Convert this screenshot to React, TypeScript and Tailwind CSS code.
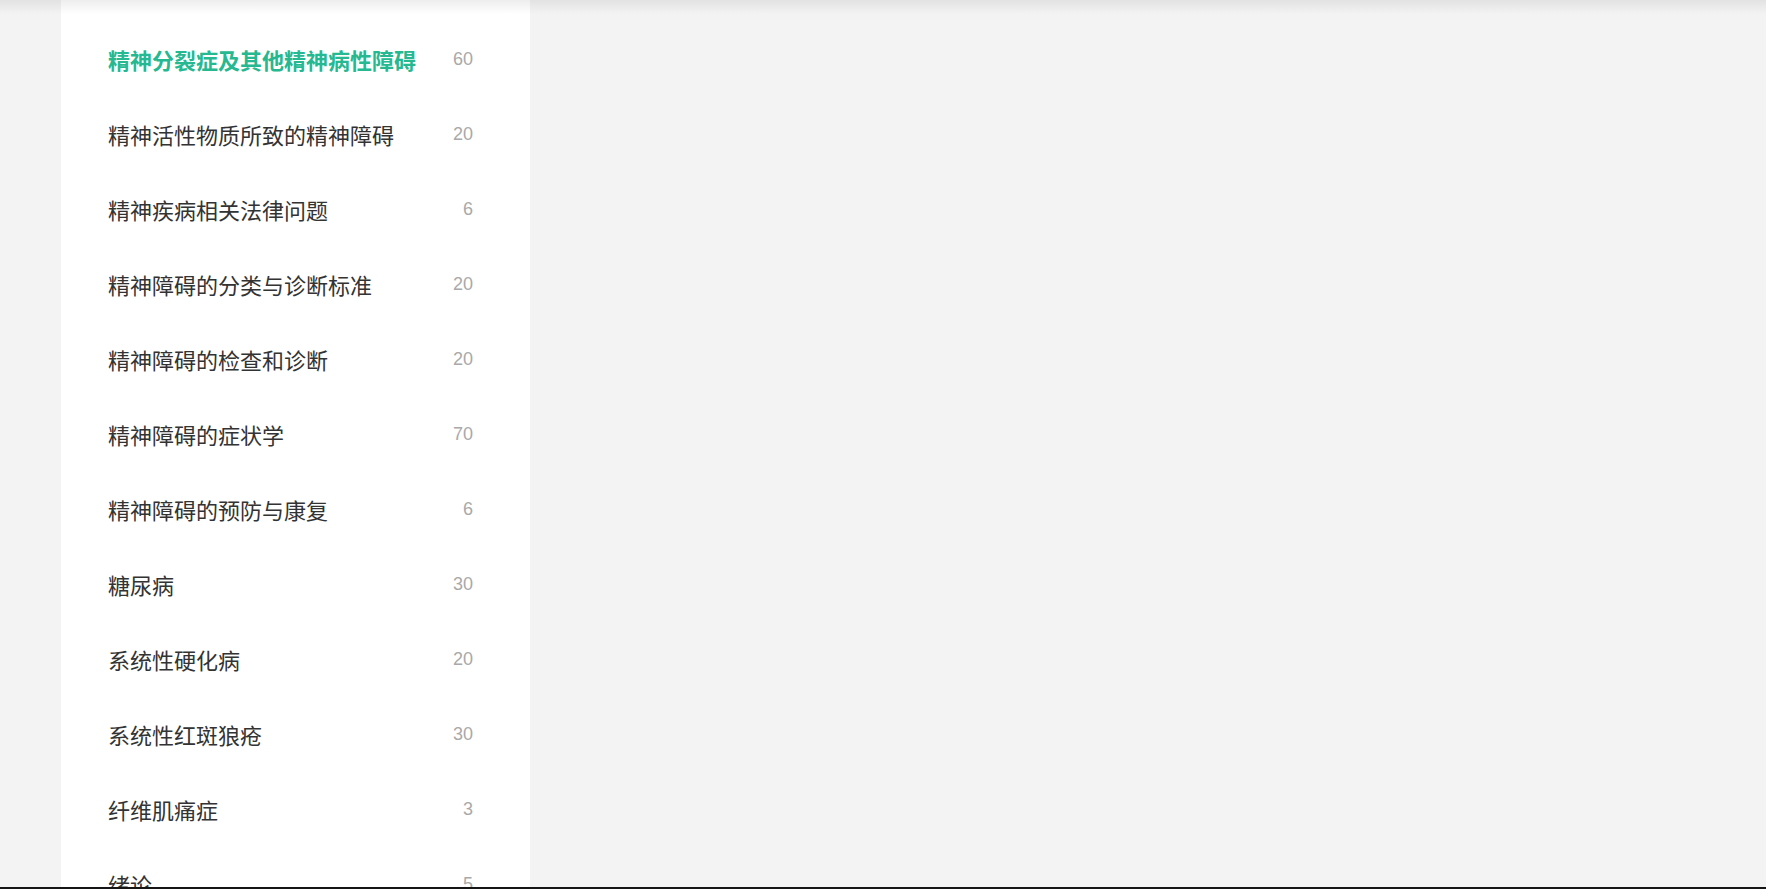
const chapters = [
  { name: "精神分裂症及其他精神病性障碍", count: 60 },
  { name: "精神活性物质所致的精神障碍", count: 20 },
  { name: "精神疾病相关法律问题", count: 6 },
  { name: "精神障碍的分类与诊断标准", count: 20 },
  { name: "精神障碍的检查和诊断", count: 20 },
  { name: "精神障碍的症状学", count: 70 },
  { name: "精神障碍的预防与康复", count: 6 },
  { name: "糖尿病", count: 30 },
  { name: "系统性硬化病", count: 20 },
  { name: "系统性红斑狼疮", count: 30 },
  { name: "纤维肌痛症", count: 3 },
  { name: "绪论", count: 5 },
]

const ChapterRow = ({ name, count, active }: { name: string; count: number; active?: boolean }) => (
  <div className="flex h-[75px] shrink-0 flex-row items-center justify-between">
    <div
      className={
        active
          ? "text-[22px] font-bold text-[#26b890]"
          : "text-[22px] text-[#333333]"
      }
      style={{ fontFamily: '"Noto Sans CJK SC", "Liberation Sans", sans-serif' }}
    >
      {name}
    </div>
    <div className="font-['Liberation_Sans',sans-serif] text-[18px] text-[#a9a9a9]">{count}</div>
  </div>
)

export default function App() {
  return (
    <div className="relative flex h-[889px] w-full flex-col overflow-hidden bg-[#f3f3f3]">
      <div className="pointer-events-none absolute left-0 right-0 top-0 h-[14px] bg-gradient-to-b from-[rgba(0,0,0,0.07)] to-transparent" />
      <div className="flex min-h-0 flex-1 flex-row">
        <div className="ml-[61px] flex w-[469px] flex-col overflow-hidden bg-white pl-[47px] pr-[57px] pt-[22px]">
          {chapters.map((c, i) => (
            <ChapterRow key={c.name} name={c.name} count={c.count} active={i === 0} />
          ))}
        </div>
      </div>
      <div className="h-[2px] shrink-0 bg-[#151515]" />
    </div>
  )
}
